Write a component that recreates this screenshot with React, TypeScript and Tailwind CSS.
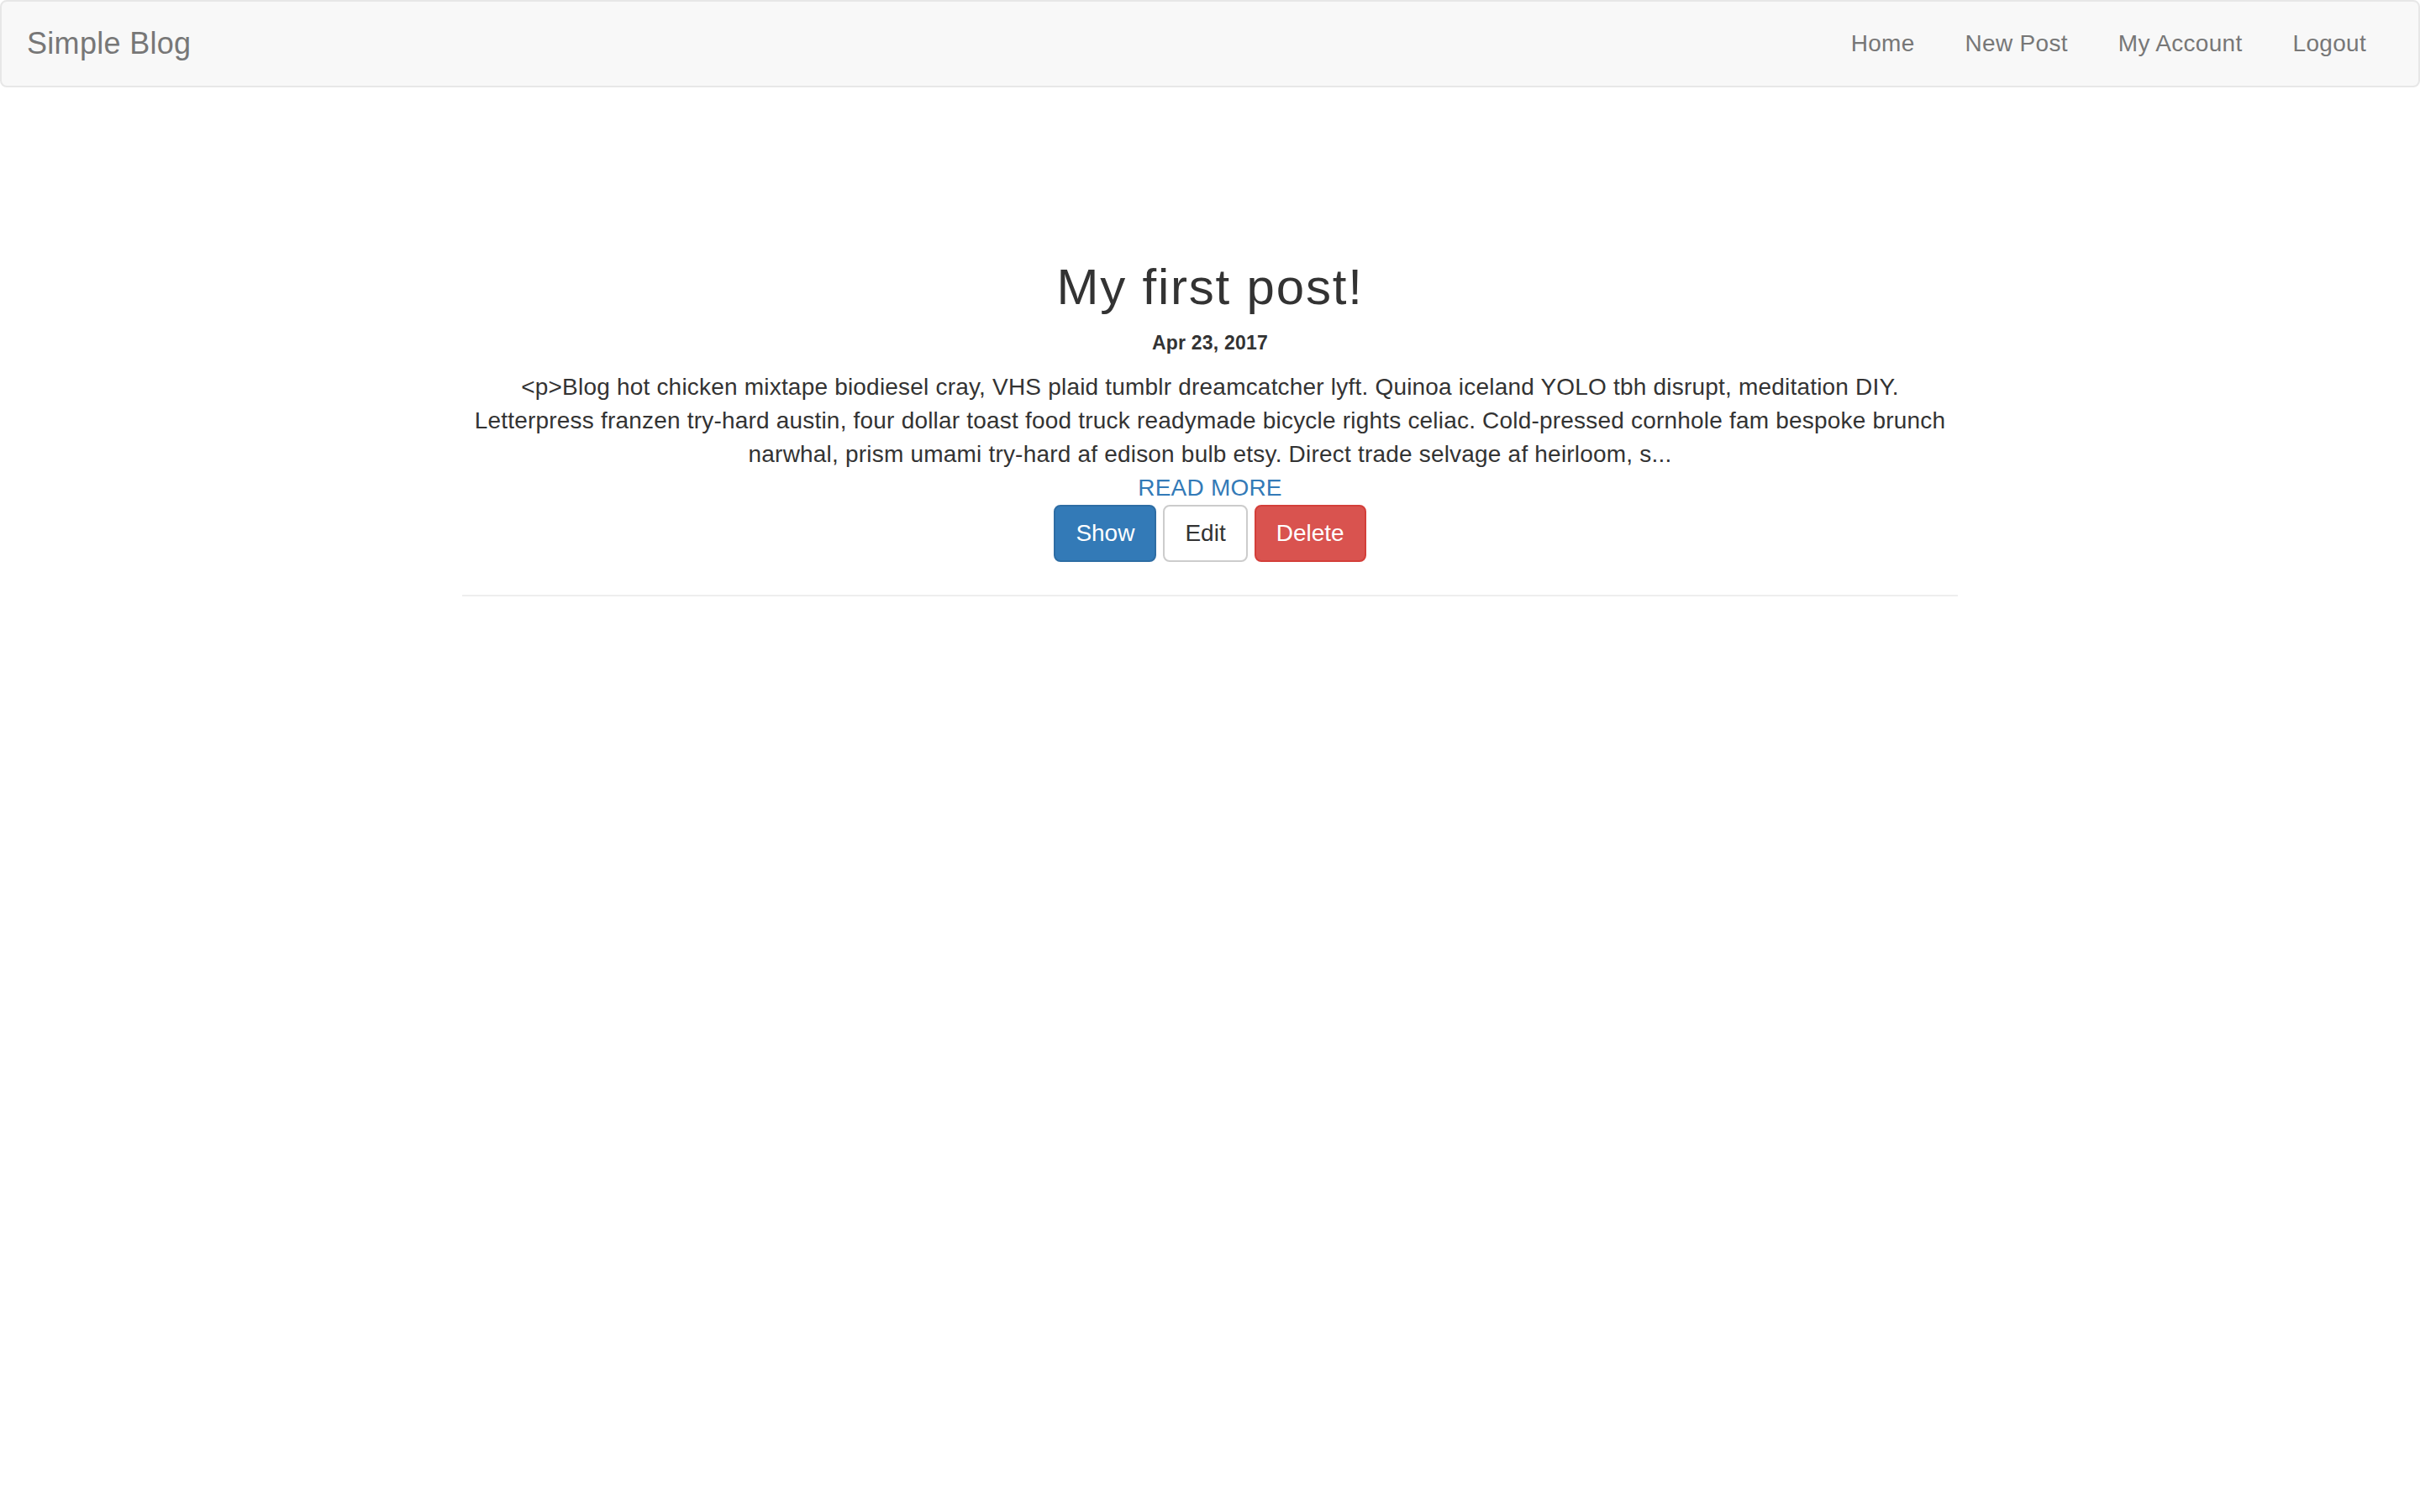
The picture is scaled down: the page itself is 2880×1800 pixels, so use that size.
const font = { fontFamily: '"Liberation Sans", Arial, Helvetica, sans-serif' }

function Navbar() {
  return (
    <nav className="flex h-[104px] items-center justify-between rounded-[8px] border-2 border-[#e7e7e7] bg-[#f8f8f8] pl-[30px] pr-[32px]">
      <a className="text-[36px] leading-[40px] tracking-[0.3px] text-[#777]">Simple Blog</a>
      <ul className="flex items-center">
        {['Home', 'New Post', 'My Account', 'Logout'].map((item) => (
          <li key={item}>
            <a className="block px-[30px] text-[28px] leading-[40px] tracking-[0.3px] text-[#777]">{item}</a>
          </li>
        ))}
      </ul>
    </nav>
  )
}

export default function App() {
  return (
    <div className="min-h-screen bg-white text-[#333]" style={font}>
      <Navbar />

      <main className="mx-auto w-[1780px] pt-[205px] text-center">
        <h1 className="text-[60px] leading-[66px] font-medium tracking-[1.8px]">My first post!</h1>
        <h6 className="mt-[21px] text-[23px] leading-[24px] font-bold tracking-[0.2px]">Apr 23, 2017</h6>

        <p className="mt-[21px] text-[28px] leading-[40px] tracking-[0.2px]">
          &lt;p&gt;Blog hot chicken mixtape biodiesel cray, VHS plaid tumblr dreamcatcher lyft. Quinoa iceland YOLO tbh disrupt, meditation DIY.
          <br />
          Letterpress franzen try-hard austin, four dollar toast food truck readymade bicycle rights celiac. Cold-pressed cornhole fam bespoke brunch
          <br />
          narwhal, prism umami try-hard af edison bulb etsy. Direct trade selvage af heirloom, s...
        </p>
        <a className="block text-[28px] leading-[40px] tracking-[0.2px] text-[#337ab7]">READ MORE</a>

        <div className="flex justify-center gap-[8px]">
          <button className="h-[68px] rounded-[8px] border-2 border-[#2e6da4] bg-[#337ab7] px-[24px] text-[28px] leading-[40px] text-white">
            Show
          </button>
          <button className="h-[68px] rounded-[8px] border-2 border-[#ccc] bg-white px-[24px] text-[28px] leading-[40px] text-[#333]">
            Edit
          </button>
          <button className="h-[68px] rounded-[8px] border-2 border-[#d43f3a] bg-[#d9534f] px-[24px] text-[28px] leading-[40px] text-white">
            Delete
          </button>
        </div>

        <hr className="mt-[39px] border-t-2 border-[#eee]" />
      </main>
    </div>
  )
}
